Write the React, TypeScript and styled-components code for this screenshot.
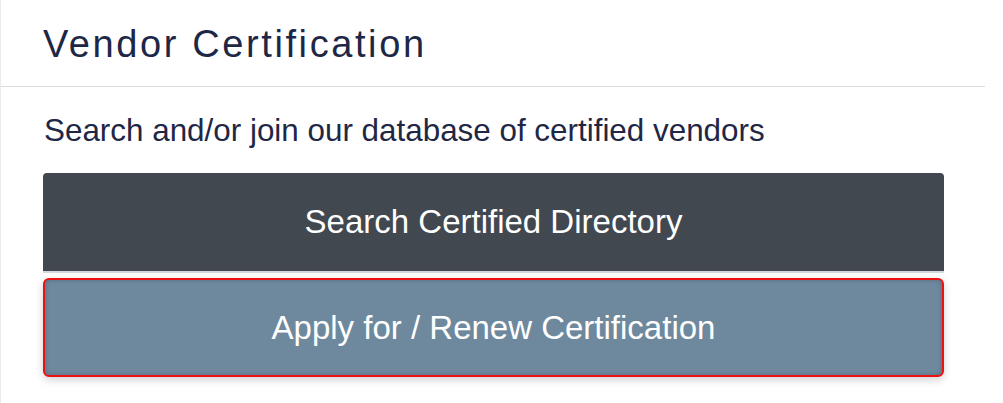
import styled, { createGlobalStyle } from "styled-components";

const GlobalStyle = createGlobalStyle`
  html, body {
    margin: 0;
    padding: 0;
    background: #ffffff;
    font-family: "Liberation Sans", Arial, sans-serif;
  }
`;

const Card = styled.section`
  width: 985px;
  height: 403px;
  box-sizing: border-box;
  border-left: 1px solid #ebebeb;
  background: #ffffff;
`;

const CardHeader = styled.header`
  height: 87px;
  box-sizing: border-box;
  display: flex;
  align-items: center;
  padding: 3px 42px 0;
  border-bottom: 1px solid #dcdcdc;
`;

const Title = styled.h2`
  margin: 0;
  font-size: 38px;
  font-weight: 400;
  letter-spacing: 2.6px;
  color: #1e2746;
`;

const CardBody = styled.div`
  padding: 26px 42px 0 42px;
  display: flex;
  flex-direction: column;
`;

const Lead = styled.p`
  margin: 0 0 24px 1px;
  font-size: 31.4px;
  line-height: 36px;
  color: #1f2745;
`;

const Actions = styled.div`
  display: flex;
  flex-direction: column;
  gap: 5px;
  width: 901px;
`;

const ActionButton = styled.button<{ $variant: "dark" | "accent" }>`
  display: flex;
  align-items: center;
  justify-content: center;
  width: 100%;
  height: ${(p) => (p.$variant === "dark" ? "100px" : "99px")};
  box-sizing: border-box;
  font-family: "Liberation Sans", Arial, sans-serif;
  font-size: 33px;
  color: #ffffff;
  cursor: pointer;
  padding: 0;
  background: ${(p) => (p.$variant === "dark" ? "#41484f" : "#6e899e")};
  border: ${(p) =>
    p.$variant === "dark" ? "none" : "2px solid #ee1111"};
  border-bottom: ${(p) =>
    p.$variant === "dark" ? "2px solid #d6d9dc" : "2px solid #ee1111"};
  border-radius: ${(p) => (p.$variant === "dark" ? "4px 4px 0 0" : "6px")};
  box-shadow: ${(p) =>
    p.$variant === "dark"
      ? "none"
      : "inset 0 0 5px rgba(0, 0, 0, 0.22), 0 3px 8px rgba(0, 0, 0, 0.18)"};
`;

export default function App() {
  return (
    <>
      <GlobalStyle />
      <Card>
        <CardHeader>
          <Title>Vendor Certification</Title>
        </CardHeader>
        <CardBody>
          <Lead>Search and/or join our database of certified vendors</Lead>
          <Actions>
            <ActionButton $variant="dark">Search Certified Directory</ActionButton>
            <ActionButton $variant="accent">Apply for / Renew Certification</ActionButton>
          </Actions>
        </CardBody>
      </Card>
    </>
  );
}
